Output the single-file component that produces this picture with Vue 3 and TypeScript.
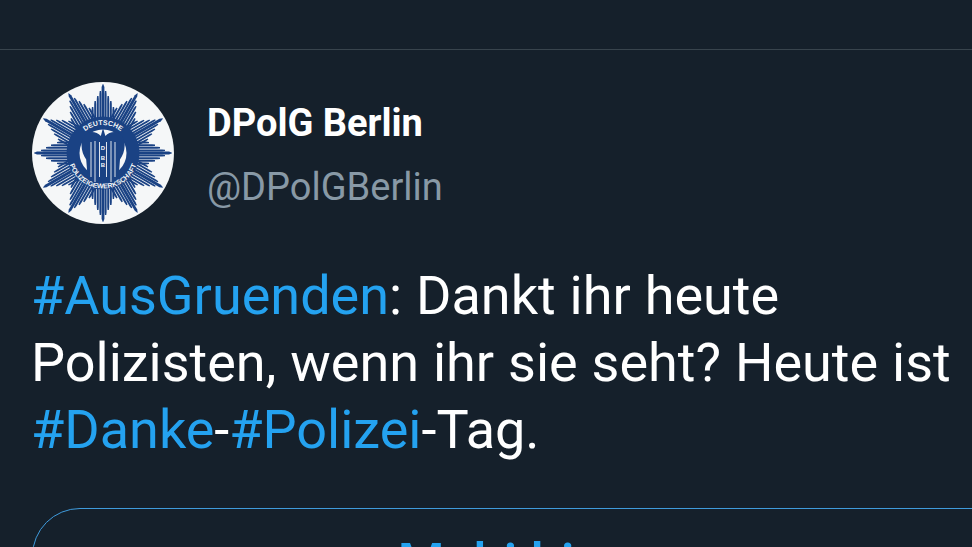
<script setup lang="ts">
const c = 71
const strips: string[] = []
const offsets = [-4, -3, -2, -1, 0, 1, 2, 3, 4]
const lengths = [46, 52, 57, 62, 69, 62, 57, 52, 46]
for (let i = 0; i < 12; i++) {
  const a = (i * Math.PI) / 6 - Math.PI / 2
  const ux = Math.cos(a)
  const uy = Math.sin(a)
  const pt = (r: number, o: number) =>
    `${(c + ux * r - uy * o).toFixed(2)} ${(c + uy * r + ux * o).toFixed(2)}`
  offsets.forEach((k, idx) => {
    const o = k * 2.6
    const w = k === 0 ? 1.4 : 1.0
    const tip = k === 0 ? 0.2 : w * 0.7
    strips.push(`M${pt(20, o - w)}L${pt(lengths[idx] - 3, o - w)}L${pt(lengths[idx], o - tip)}L${pt(lengths[idx], o + tip)}L${pt(lengths[idx] - 3, o + w)}L${pt(20, o + w)}Z`)
  })
}
</script>

<template>
  <main class="page">
    <div class="rule"></div>
    <section class="tweet">
      <header class="author">
        <svg class="avatar" viewBox="0 0 142 142" width="142" height="142" aria-hidden="true">
          <circle cx="71" cy="71" r="71" fill="#f5f7f8" />
          <path v-for="(d, i) in strips" :key="i" :d="d" fill="#1a4284" />
          <circle cx="71" cy="71" r="36.5" fill="#1a4284" />
          <circle cx="71" cy="71" r="23.5" fill="#f5f7f8" />
          <defs>
            <path id="ring-top" d="M43 71A28 28 0 0 1 99 71" />
            <path id="ring-bottom" d="M35.5 71A35.5 35.5 0 0 0 106.5 71" />
          </defs>
          <text class="ring"><textPath href="#ring-top" startOffset="50%" text-anchor="middle">DEUTSCHE</textPath></text>
          <text class="ring"><textPath href="#ring-bottom" startOffset="50%" text-anchor="middle">POLIZEIGEWERKSCHAFT</textPath></text>
          <path d="M71 46l2.4 8c3-3.5 8-5 12-3.6 5 1.8 7.3 6.7 7.3 12.6 0 6-2.2 11-4.7 14.5l-1.4 17.5h-4.2l-.8 6h-21l-.8-6h-4.2l-1.4-17.5c-2.5-3.5-4.7-8.5-4.7-14.5 0-5.9 2.3-10.8 7.3-12.6 4-1.4 9 .1 12 3.6z" fill="#1a4284" />
          <path d="M59 60v35M63 59v41M79 59v41M83 60v35" stroke="#f5f7f8" stroke-width=".9" />
          <path d="M67.5 60v35M74.5 60v35" stroke="#f5f7f8" stroke-width=".9" />
          <text x="71" y="67.5" class="dbb">D</text>
          <text x="71" y="78" class="dbb">B</text>
          <text x="71" y="85" class="dbb">B</text>
        </svg>
        <div class="names">
          <div class="name">DPolG Berlin</div>
          <div class="handle">@DPolGBerlin</div>
        </div>
      </header>
      <p class="body"><span class="link">#AusGruenden</span>: Dankt ihr heute Polizisten, wenn ihr sie seht? Heute ist <span class="link">#Danke</span>-<span class="link">#Polizei</span>-Tag.</p>
      <div class="button">Mehi hi</div>
    </section>
  </main>
</template>

<style>
html, body { margin: 0; background: #15202b; overflow: hidden; }
</style>

<style scoped>
.page {
  width: 972px;
  height: 547px;
  overflow: hidden;
  background: #15202b;
  padding-top: 49px;
  box-sizing: border-box;
  font-family: Roboto, sans-serif;
  color: #fff;
}
.rule { height: 1px; background: #38444d; }
.tweet { padding: 32px 0 0 32px; }
.author { display: flex; align-items: center; gap: 33px; }
.avatar { display: block; flex: none; }
.ring { font: 700 7px "Liberation Sans", sans-serif; fill: #f5f7f8; }
.dbb { font: 700 6px "Liberation Sans", sans-serif; fill: #f5f7f8; text-anchor: middle; }
.names { display: flex; flex-direction: column; gap: 20px; padding-top: 3px; }
.name { font-size: 38px; font-weight: 700; line-height: 44px; }
.handle { font-size: 38px; line-height: 44px; color: #8899a6; }
.body { margin: 38px 0 0 -1px; width: 935px; font-size: 54px; line-height: 67px; word-spacing: 0.5px; }
.link { color: #24a2f0; }
.button {
  margin-top: 45px;
  width: 1000px;
  height: 120px;
  padding: 27px 92px 0 0;
  border: 1px solid #3f9bdc;
  border-radius: 48px;
  box-sizing: border-box;
  box-shadow: 0 1px 0 #0e3354;
  color: #24a2f0;
  font-size: 54px;
  font-weight: 500;
  text-align: center;
  line-height: 54px;
}
</style>
